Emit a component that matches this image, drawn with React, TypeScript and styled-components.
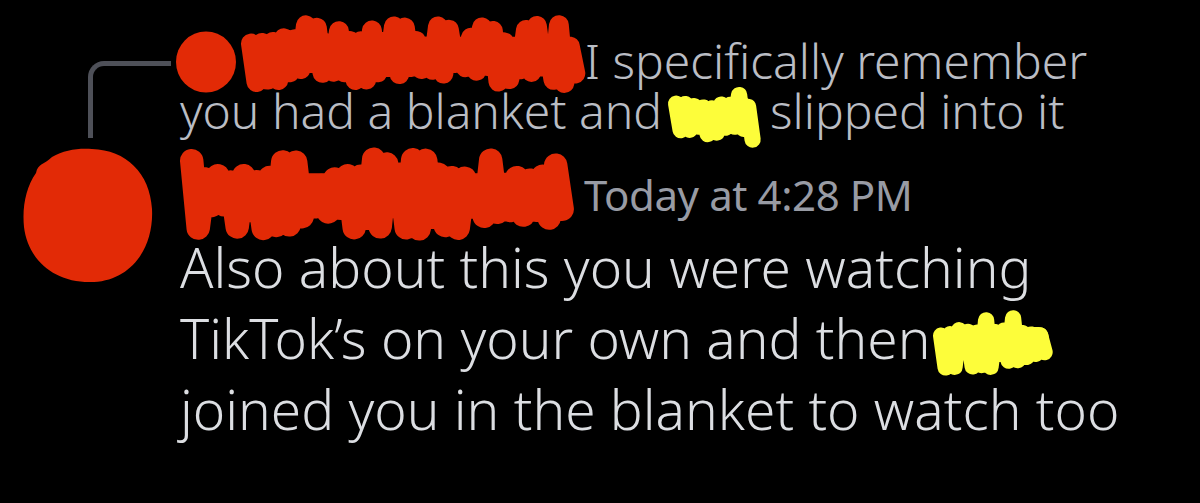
import styled, { createGlobalStyle } from "styled-components";

const GlobalStyle = createGlobalStyle`
  html, body {
    margin: 0;
    padding: 0;
    background: #000;
  }
  body {
    font-family: "Noto Sans", "DejaVu Sans", sans-serif;
    overflow: hidden;
  }
`;

const RED = "#e22a06";
const YELLOW = "#fdfd3a";

const Message = styled.div`
  display: flex;
  flex-direction: column;
  width: 1200px;
  height: 503px;
  background: #000;
`;

const Row = styled.div`
  display: flex;
  align-items: flex-start;
`;

const Gutter = styled.div`
  flex: 0 0 180px;
  display: flex;
  flex-direction: column;
`;

const Spine = styled.div`
  margin-top: 61px;
  margin-left: 88px;
  width: 78px;
  height: 72px;
  border-left: 5px solid #4e5058;
  border-top: 5px solid #4e5058;
  border-top-left-radius: 16px;
`;

const Reply = styled.p`
  margin: 36px 0 0 0;
  height: 100px;
  font-size: 48px;
  font-weight: 300;
  line-height: 50px;
  color: #babdc4;
  white-space: nowrap;
`;

const Content = styled.div`
  flex: 1;
  display: flex;
  flex-direction: column;
`;

const Header = styled.div`
  display: flex;
  align-items: center;
  gap: 12px;
  margin-top: 26px;
  height: 60px;
`;

const Stamp = styled.span`
  font-size: 42px;
  font-weight: 400;
  color: #989ba4;
  letter-spacing: -0.4px;
`;

const Body = styled.p`
  margin: 7px 0 0 0;
  font-size: 55px;
  font-weight: 300;
  line-height: 71px;
  color: #dcdee2;
  white-space: nowrap;
`;

const Inline = styled.span<{ $w: number; $h: number; $gap?: number; $dy?: number }>`
  display: inline-block;
  vertical-align: middle;
  width: ${(p) => p.$w}px;
  height: ${(p) => p.$h}px;
  margin: ${(p) => -(p.$h - 36) / 2}px ${(p) => p.$gap ?? 8}px;
  transform: translateY(${(p) => p.$dy ?? 0}px);
`;

const BigAvatar = styled.div`
  margin-top: 9px;
  margin-left: 22px;
  width: 132px;
  height: 136px;
`;

function rng(seed: number) {
  let s = seed;
  return () => {
    s = (s * 9301 + 49297) % 233280;
    return s / 233280;
  };
}

// marker scribble: dense zig-zag of fat round strokes over a solid band
function Scribble({
  w,
  h,
  color,
  seed,
  step = 11,
  peak = 0.35,
}: {
  w: number;
  h: number;
  color: string;
  seed: number;
  step?: number;
  peak?: number;
}) {
  const r = rng(seed);
  const sw = step * 1.8;
  const pad = sw / 2;
  const n = Math.floor((w - sw) / step);
  let d = "";
  for (let i = 0; i <= n; i++) {
    const x = pad + i * step;
    const tall = r() < peak;
    const top = pad + (tall ? r() * h * 0.08 : h * 0.16 + r() * h * 0.14);
    const bot = h - pad - (r() < 0.3 ? r() * h * 0.05 : h * 0.1 + r() * h * 0.16);
    d += `${i === 0 ? "M" : "L"}${x.toFixed(1)},${top.toFixed(1)} L${(x + step / 2).toFixed(1)},${bot.toFixed(1)} `;
  }
  return (
    <svg width={w} height={h} viewBox={`0 0 ${w} ${h}`} style={{ overflow: "visible", display: "block" }}>
      <rect x={pad} y={h * 0.28} width={w - sw} height={h * 0.44} rx={h * 0.15} fill={color} />
      <path d={d} fill="none" stroke={color} strokeWidth={sw} strokeLinecap="round" strokeLinejoin="round" />
    </svg>
  );
}

function Dot({ size }: { size: number }) {
  return (
    <svg width={size} height={size} viewBox="0 0 62 62" style={{ display: "block" }}>
      <ellipse cx="31" cy="31" rx="30" ry="30.5" fill={RED} />
    </svg>
  );
}

function Blob() {
  return (
    <svg width="132" height="136" viewBox="0 0 132 136" style={{ display: "block" }}>
      <path
        d="M70 2 C104 3 128 26 130 62 C132 100 110 133 72 135 C34 137 6 114 2 80 C0 60 4 40 14 26 C16 16 22 18 30 10 C42 3 56 1 70 2 Z"
        fill={RED}
      />
    </svg>
  );
}

export default function App() {
  return (
    <>
      <GlobalStyle />
      <Message>
        <Row>
          <Gutter>
            <Spine />
          </Gutter>
          <Reply>
            <Inline $w={62} $h={62} $gap={0} $dy={-4} style={{ marginLeft: -5 }}>
              <Dot size={62} />
            </Inline>
            <Inline $w={340} $h={78} $gap={4} $dy={-12}>
              <Scribble w={340} h={78} color={RED} seed={7} />
            </Inline>
            I specifically remember
            <br />
            you had a blanket and
            <Inline $w={96} $h={66} $gap={6} $dy={0}>
              <Scribble w={96} h={66} color={YELLOW} seed={3} step={9} peak={0.2} />
            </Inline>
            slipped into it
          </Reply>
        </Row>
        <Row>
          <Gutter>
            <BigAvatar>
              <Blob />
            </BigAvatar>
          </Gutter>
          <Content>
            <Header>
              <Scribble w={392} h={94} color={RED} seed={21} step={13} />
              <Stamp>Today at 4:28 PM</Stamp>
            </Header>
            <Body>
              Also about this you were watching
              <br />
              TikTok’s on your own and then
              <Inline $w={124} $h={68} $gap={3} $dy={-2}>
                <Scribble w={124} h={68} color={YELLOW} seed={11} step={9} peak={0.2} />
              </Inline>
              <br />
              joined you in the blanket to watch too
            </Body>
          </Content>
        </Row>
      </Message>
    </>
  );
}
